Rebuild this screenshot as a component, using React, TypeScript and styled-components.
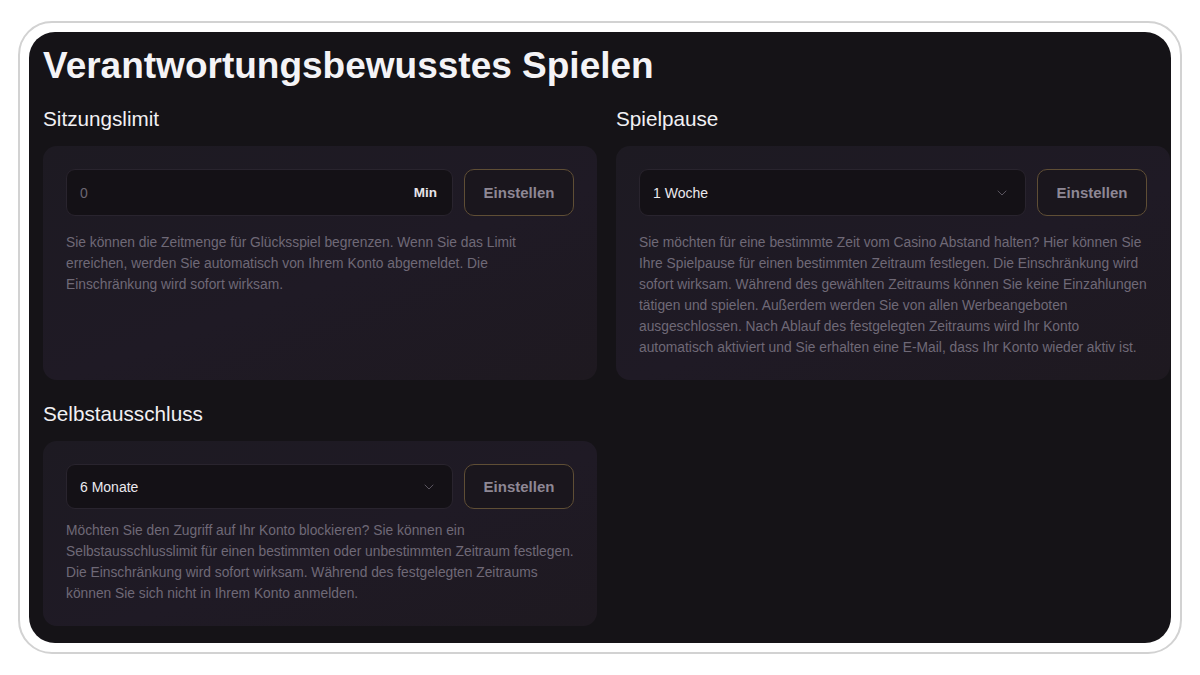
import React from "react";
import styled, { createGlobalStyle } from "styled-components";
import { ChevronDown } from "lucide-react";

const GlobalStyle = createGlobalStyle`
  html, body {
    margin: 0;
    padding: 0;
    background: #ffffff;
    font-family: "Liberation Sans", Arial, sans-serif;
  }
`;

const Frame = styled.div`
  box-sizing: border-box;
  margin: 21px 18px 0;
  height: 633px;
  border: 2px solid #d2d2d2;
  border-radius: 34px;
  padding: 9px;
  background: #ffffff;
`;

const Panel = styled.div`
  box-sizing: border-box;
  height: 100%;
  background: #151317;
  border-radius: 26px;
  overflow: hidden;
  padding: 12px 0 16px 14px;
`;

const Title = styled.h1`
  margin: 0 0 19px;
  font-size: 37px;
  line-height: 44px;
  font-weight: 700;
  color: #f4f3f6;
`;

const Grid = styled.div`
  display: grid;
  grid-template-columns: 554px 554px;
  column-gap: 19px;
  row-gap: 22px;
`;

const Section = styled.section`
  display: flex;
  flex-direction: column;
`;

const Heading = styled.h2`
  margin: 0 0 15px;
  font-size: 20.7px;
  line-height: 24px;
  font-weight: 400;
  color: #f1f0f3;
`;

const Card = styled.div`
  flex: 1;
  box-sizing: border-box;
  border-radius: 14px;
  padding: 23px 23px 22px;
  background: linear-gradient(160deg, #1d1a22 0%, #1f1a25 55%, #1e1920 100%);
`;

const Row = styled.div<{ $compact?: boolean }>`
  display: flex;
  gap: 11px;
  margin-bottom: ${(p) => (p.$compact ? "11px" : "16px")};
`;

const Field = styled.div<{ $compact?: boolean }>`
  flex: 1;
  box-sizing: border-box;
  height: ${(p) => (p.$compact ? "45px" : "47px")};
  display: flex;
  align-items: center;
  justify-content: space-between;
  padding: 0 15px 0 13px;
  border-radius: 9px;
  background: #141116;
  border: 1px solid #29242e;
`;

const FieldValue = styled.span<{ $muted?: boolean }>`
  font-size: 14px;
  color: ${(p) => (p.$muted ? "#6c6672" : "#ebe9ee")};
`;

const Unit = styled.span`
  font-size: 13.5px;
  font-weight: 700;
  color: #e6e4e9;
`;

const Chevron = styled(ChevronDown)`
  color: #5f5964;
`;

const SetButton = styled.button<{ $compact?: boolean }>`
  box-sizing: border-box;
  width: 110px;
  height: ${(p) => (p.$compact ? "45px" : "47px")};
  border-radius: 10px;
  border: 1px solid #5f4e35;
  background: #1a161d;
  color: #8e8794;
  font-family: "Liberation Sans", Arial, sans-serif;
  font-size: 15px;
  font-weight: 700;
  cursor: pointer;
`;

const Description = styled.p`
  margin: 0;
  font-size: 13.8px;
  line-height: 21px;
  color: #6f6977;
`;

type Block = {
  title: string;
  value: string;
  kind: "input" | "select";
  compact?: boolean;
  text: string;
};

const blocks: Block[] = [
  {
    title: "Sitzungslimit",
    value: "0",
    kind: "input",
    text: "Sie können die Zeitmenge für Glücksspiel begrenzen. Wenn Sie das Limit erreichen, werden Sie automatisch von Ihrem Konto abgemeldet. Die Einschränkung wird sofort wirksam.",
  },
  {
    title: "Spielpause",
    value: "1 Woche",
    kind: "select",
    text: "Sie möchten für eine bestimmte Zeit vom Casino Abstand halten? Hier können Sie Ihre Spielpause für einen bestimmten Zeitraum festlegen. Die Einschränkung wird sofort wirksam. Während des gewählten Zeitraums können Sie keine Einzahlungen tätigen und spielen. Außerdem werden Sie von allen Werbeangeboten ausgeschlossen. Nach Ablauf des festgelegten Zeitraums wird Ihr Konto automatisch aktiviert und Sie erhalten eine E-Mail, dass Ihr Konto wieder aktiv ist.",
  },
  {
    title: "Selbstausschluss",
    value: "6 Monate",
    kind: "select",
    compact: true,
    text: "Möchten Sie den Zugriff auf Ihr Konto blockieren? Sie können ein Selbstausschlusslimit für einen bestimmten oder unbestimmten Zeitraum festlegen. Die Einschränkung wird sofort wirksam. Während des festgelegten Zeitraums können Sie sich nicht in Ihrem Konto anmelden.",
  },
];

function LimitCard({ block }: { block: Block }) {
  return (
    <Section>
      <Heading>{block.title}</Heading>
      <Card>
        <Row $compact={block.compact}>
          <Field $compact={block.compact}>
            <FieldValue $muted={block.kind === "input"}>{block.value}</FieldValue>
            {block.kind === "input" ? (
              <Unit>Min</Unit>
            ) : (
              <Chevron size={16} strokeWidth={1.4} />
            )}
          </Field>
          <SetButton $compact={block.compact}>Einstellen</SetButton>
        </Row>
        <Description>{block.text}</Description>
      </Card>
    </Section>
  );
}

export default function App() {
  return (
    <>
      <GlobalStyle />
      <Frame>
        <Panel>
          <Title>Verantwortungsbewusstes Spielen</Title>
          <Grid>
            {blocks.map((b) => (
              <LimitCard key={b.title} block={b} />
            ))}
          </Grid>
        </Panel>
      </Frame>
    </>
  );
}
